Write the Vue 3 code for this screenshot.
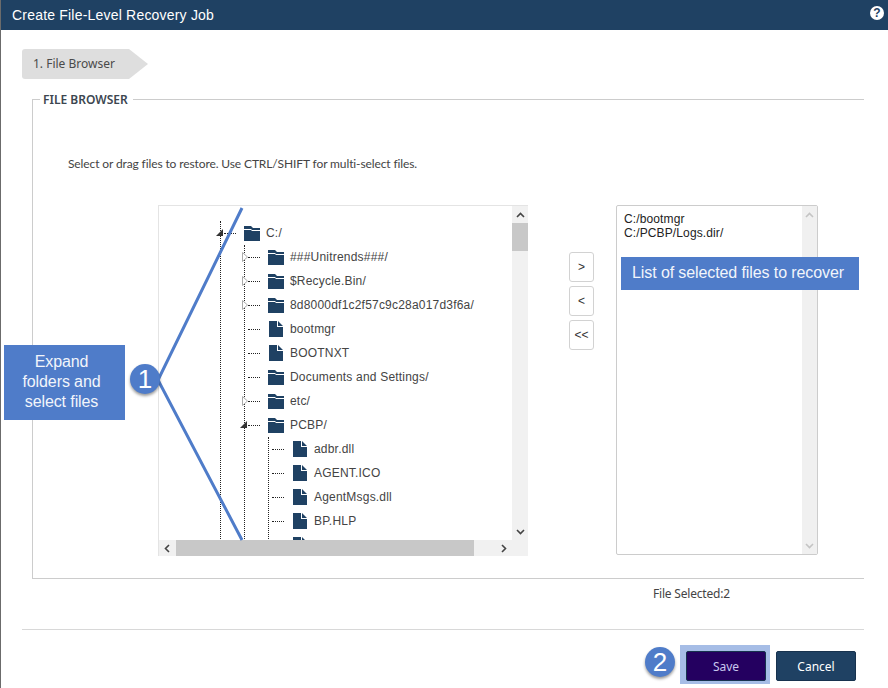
<script setup>
const level1 = [
  { name: '###Unitrends###/', type: 'folder', collapsed: true },
  { name: '$Recycle.Bin/', type: 'folder', collapsed: true },
  { name: '8d8000df1c2f57c9c28a017d3f6a/', type: 'folder', collapsed: true },
  { name: 'bootmgr', type: 'file' },
  { name: 'BOOTNXT', type: 'file' },
  { name: 'Documents and Settings/', type: 'folder' },
  { name: 'etc/', type: 'folder', collapsed: true },
]
const level2 = ['adbr.dll', 'AGENT.ICO', 'AgentMsgs.dll', 'BP.HLP', '']
</script>

<template>
  <div class="page">
    <header class="titlebar">
      <h1 class="title">Create File-Level Recovery Job</h1>
      <span class="help">?</span>
    </header>

    <main class="content">
      <div class="step">1. File Browser</div>

      <fieldset class="group">
        <legend class="legend">FILE BROWSER</legend>
        <p class="hint">Select or drag files to restore. Use CTRL/SHIFT for multi-select files.</p>

        <div class="browser">
          <div class="tree-frame">
            <div class="tree-view">
              <div class="root">
                <div class="row">
                  <i class="tri open"></i><span class="dash"></span>
                  <svg class="icon" viewBox="0 0 16 15"><path d="M0 0h7l2 2h7v2H8L7 3H0zM0 4h7l1 1h8v10H0z" /></svg>
                  <span class="label">C:/</span>
                </div>
                <ul class="children">
                  <li v-for="item in level1" :key="item.name" class="row">
                    <svg v-if="item.collapsed" class="tri closed" viewBox="0 0 6 10"><path d="M0.5 0.5L5.5 5L0.5 9.5z" /></svg>
                    <span class="dash"></span>
                    <svg v-if="item.type === 'folder'" class="icon" viewBox="0 0 16 15"><path d="M0 0h7l2 2h7v2H8L7 3H0zM0 4h7l1 1h8v10H0z" /></svg>
                    <svg v-else class="icon file" viewBox="0 0 14 16"><path d="M0 0h8v6h6v10H0zM9 0l5 5H9z" /></svg>
                    <span class="label">{{ item.name }}</span>
                  </li>
                  <li class="row">
                    <i class="tri open"></i><span class="dash"></span>
                    <svg class="icon" viewBox="0 0 16 15"><path d="M0 0h7l2 2h7v2H8L7 3H0zM0 4h7l1 1h8v10H0z" /></svg>
                    <span class="label">PCBP/</span>
                  </li>
                  <li>
                    <ul class="children nested">
                      <li v-for="name in level2" :key="name" class="row">
                        <span class="dash"></span>
                        <svg class="icon file" viewBox="0 0 14 16"><path d="M0 0h8v6h6v10H0zM9 0l5 5H9z" /></svg>
                        <span class="label">{{ name }}</span>
                      </li>
                    </ul>
                  </li>
                </ul>
              </div>
            </div>

            <div class="vbar">
              <svg class="chev" viewBox="0 0 9 6"><path d="M1 5l3.5-3.5L8 5" /></svg>
              <div class="vthumb"></div>
              <svg class="chev end" viewBox="0 0 9 6"><path d="M1 1l3.5 3.5L8 1" /></svg>
            </div>
            <div class="hbar">
              <svg class="chev side" viewBox="0 0 6 9"><path d="M5 1L1.5 4.5 5 8" /></svg>
              <div class="hthumb"></div>
              <svg class="chev side" viewBox="0 0 6 9"><path d="M1 1l3.5 3.5L1 8" /></svg>
            </div>
            <div class="corner"></div>
          </div>

          <div class="transfer">
            <button class="move">&gt;</button>
            <button class="move">&lt;</button>
            <button class="move">&lt;&lt;</button>
          </div>

          <div class="selected">
            <div class="selected-list">
              <div>C:/bootmgr</div>
              <div>C:/PCBP/Logs.dir/</div>
            </div>
            <div class="vbar light">
              <svg class="chev" viewBox="0 0 9 6"><path d="M1 5l3.5-3.5L8 5" /></svg>
              <svg class="chev end" viewBox="0 0 9 6"><path d="M1 1l3.5 3.5L8 1" /></svg>
            </div>
          </div>
        </div>
      </fieldset>

      <div class="count">File Selected:2</div>

      <footer class="actions">
        <div class="save-highlight">
          <button class="btn save">Save</button>
        </div>
        <button class="btn">Cancel</button>
      </footer>
    </main>

    <svg class="pointers" viewBox="0 0 888 688">
      <path d="M242 208L158 380L242 540" />
    </svg>
    <div class="callout left">Expand<br />folders and<br />select files</div>
    <div class="badge one">1</div>
    <div class="callout right">List of selected files to recover</div>
    <div class="badge two">2</div>
  </div>
</template>

<style>
html, body { margin: 0; background: #fff; }
</style>

<style scoped>
* { box-sizing: border-box; }
.page {
  position: relative;
  width: 888px;
  height: 688px;
  overflow: hidden;
  background: #fff;
  border-left: 1px solid #6b6b6b;
  font-family: "Noto Sans", sans-serif;
  color: #444;
}
.titlebar {
  height: 30px;
  background: #1f4163;
  display: flex;
  align-items: center;
  justify-content: space-between;
  padding: 0 4px 1px 11px;
}
.title {
  margin: 0;
  font: 400 14px "Liberation Sans", sans-serif;
  color: #fff;
  letter-spacing: 0.2px;
}
.help {
  width: 14px;
  height: 14px;
  margin-bottom: 3px;
  border-radius: 50%;
  background: #fff;
  color: #1f4163;
  font: 700 12px/14px "Liberation Sans", sans-serif;
  text-align: center;
}
.content {
  padding: 19px 24px 0 21px;
}
.step {
  width: 126px;
  height: 30px;
  padding-left: 11px;
  background: #dedede;
  clip-path: polygon(0 0, 107px 0, 100% 50%, 107px 100%, 0 100%);
  border-radius: 3px 0 0 3px;
  font-size: 12px;
  line-height: 29px;
  color: #4a4a4a;
}
.group {
  margin: 11px 0 0 10px;
  padding: 0;
  height: 489px;
  min-width: 0;
  border: 1px solid #ccc;
  border-right: 0;
}
.legend {
  margin-left: 7px;
  padding: 2px 5px 0 3px;
  font-size: 12px;
  line-height: 16px;
  font-weight: 600;
  color: #3c4650;
}
.hint {
  margin: 49px 0 0 35px;
  font-family: Lato, sans-serif;
  font-size: 12px;
  line-height: 14px;
  letter-spacing: -0.115px;
  color: #444;
}
.browser {
  display: flex;
  align-items: flex-start;
  margin: 34px 0 0 125px;
}
.tree-frame {
  display: grid;
  grid-template-columns: 353px 16px;
  grid-template-rows: 334px 16px;
  width: 370px;
  height: 351px;
  border-left: 1px solid #e4e4e4;
  border-top: 1px solid #e4e4e4;
}
.tree-view {
  overflow: hidden;
  font: 12px "Liberation Sans", sans-serif;
  letter-spacing: 0.2px;
  color: #444;
}
.root {
  margin: 15px 0 0 61px;
  border-left: 1px dotted #222;
  height: 400px;
}
.children {
  list-style: none;
  margin: 0 0 0 23px;
  padding: 0;
  border-left: 1px dotted #222;
  height: 400px;
}
.nested {
  height: 120px;
}
.row {
  position: relative;
  display: flex;
  align-items: center;
  height: 24px;
  padding-left: 3px;
}
.dash {
  width: 12px;
  margin-right: 8px;
  border-top: 1px dotted #222;
}
.icon {
  flex: none;
  width: 16px;
  height: 15px;
  fill: #1f4163;
}
.icon.file {
  height: 16px;
  padding: 0 1px;
}
.label {
  margin-left: 6px;
  white-space: nowrap;
}
.tri {
  position: absolute;
}
.tri.open {
  left: -5px;
  top: 8px;
  width: 0;
  height: 0;
  border-style: solid;
  border-width: 0 0 7px 7px;
  border-color: transparent transparent #333 transparent;
}
.tri.closed {
  left: -3px;
  top: 7px;
  width: 6px;
  height: 10px;
  fill: #fff;
  stroke: #aaa;
  stroke-width: 1;
}
.vbar {
  grid-row: 1;
  grid-column: 2;
  display: flex;
  flex-direction: column;
  align-items: center;
  background: #f1f1f1;
}
.vthumb {
  width: 100%;
  height: 28px;
  margin-top: 5px;
  background: #c8c8c8;
}
.chev {
  flex: none;
  width: 9px;
  height: 6px;
  margin-top: 6px;
  fill: none;
  stroke: #444;
  stroke-width: 1.6;
}
.chev.end {
  margin-top: auto;
  margin-bottom: 5px;
}
.hbar {
  grid-row: 2;
  grid-column: 1;
  display: flex;
  align-items: center;
  padding: 0 22px 0 14px;
  background: #f1f1f1;
  position: relative;
}
.hbar .side {
  width: 6px;
  height: 9px;
  margin: 0;
  position: absolute;
  left: 5px;
}
.hbar .side:last-child {
  left: 342px;
}
.hthumb {
  width: 298px;
  height: 100%;
  margin-left: 3px;
  background: #c8c8c8;
}
.corner {
  background: #f1f1f1;
}
.transfer {
  display: flex;
  flex-direction: column;
  gap: 4px;
  margin: 47px 22px 0 41px;
}
.move {
  width: 25px;
  height: 30px;
  padding: 0;
  background: #fff;
  border: 1px solid #d2d2d2;
  border-radius: 3px;
  font: 12px "Liberation Sans", sans-serif;
  color: #333;
}
.selected {
  display: flex;
  width: 202px;
  height: 350px;
  border: 1px solid #ccc;
  border-radius: 2px;
}
.selected-list {
  flex: 1;
  padding: 6px 7px;
  font: 12px/14px "Liberation Sans", sans-serif;
  letter-spacing: 0.12px;
  color: #222;
}
.vbar.light {
  width: 15px;
  background: #f0f0f0;
}
.vbar.light .chev {
  stroke: #c4c4c4;
}
.count {
  margin: 7px 0 0 631px;
  font-size: 12px;
  line-height: 16px;
  color: #444;
  letter-spacing: -0.2px;
}
.actions {
  display: flex;
  justify-content: flex-end;
  gap: 10px;
  margin-top: 27px;
  padding: 21px 8px 0 0;
  border-top: 1px solid #d8d8d8;
}
.save-highlight {
  display: flex;
  margin: -6px -4px -3px -6px;
  padding: 6px 4px 3px 6px;
  background: #a6bde6;
}
.btn {
  width: 80px;
  height: 30px;
  padding: 0;
  background: #1f4163;
  border: 1px solid #17324e;
  border-radius: 2px;
  font-family: "Noto Sans", sans-serif;
  font-size: 12px;
  color: #fff;
}
.save {
  background: #240060;
  color: #c8c8ee;
}
.pointers {
  position: absolute;
  left: -1px;
  top: 0;
  width: 888px;
  height: 688px;
  pointer-events: none;
}
.pointers path {
  fill: none;
  stroke: #4f7cc9;
  stroke-width: 3;
}
.callout {
  position: absolute;
  background: #4f7cc9;
  color: #f2f5fb;
  font-family: "Liberation Sans", sans-serif;
  text-align: center;
  letter-spacing: -0.1px;
}
.callout.left {
  left: 3px;
  top: 345px;
  width: 121px;
  height: 75px;
  padding: 7px 6px 0 0;
  font-size: 16px;
  line-height: 20px;
}
.callout.right {
  left: 620px;
  top: 257px;
  width: 238px;
  height: 33px;
  padding-right: 4px;
  font-size: 16px;
  line-height: 32px;
}
.badge {
  position: absolute;
  width: 30px;
  height: 30px;
  border-radius: 50%;
  background: #4f7cc9;
  color: #fff;
  font: 26px/30px "Liberation Sans", sans-serif;
  text-align: center;
  box-shadow: 0 2px 3px rgba(0, 0, 0, 0.4);
}
.badge.one {
  left: 129px;
  top: 364px;
}
.badge.two {
  left: 644px;
  top: 647px;
}
</style>
